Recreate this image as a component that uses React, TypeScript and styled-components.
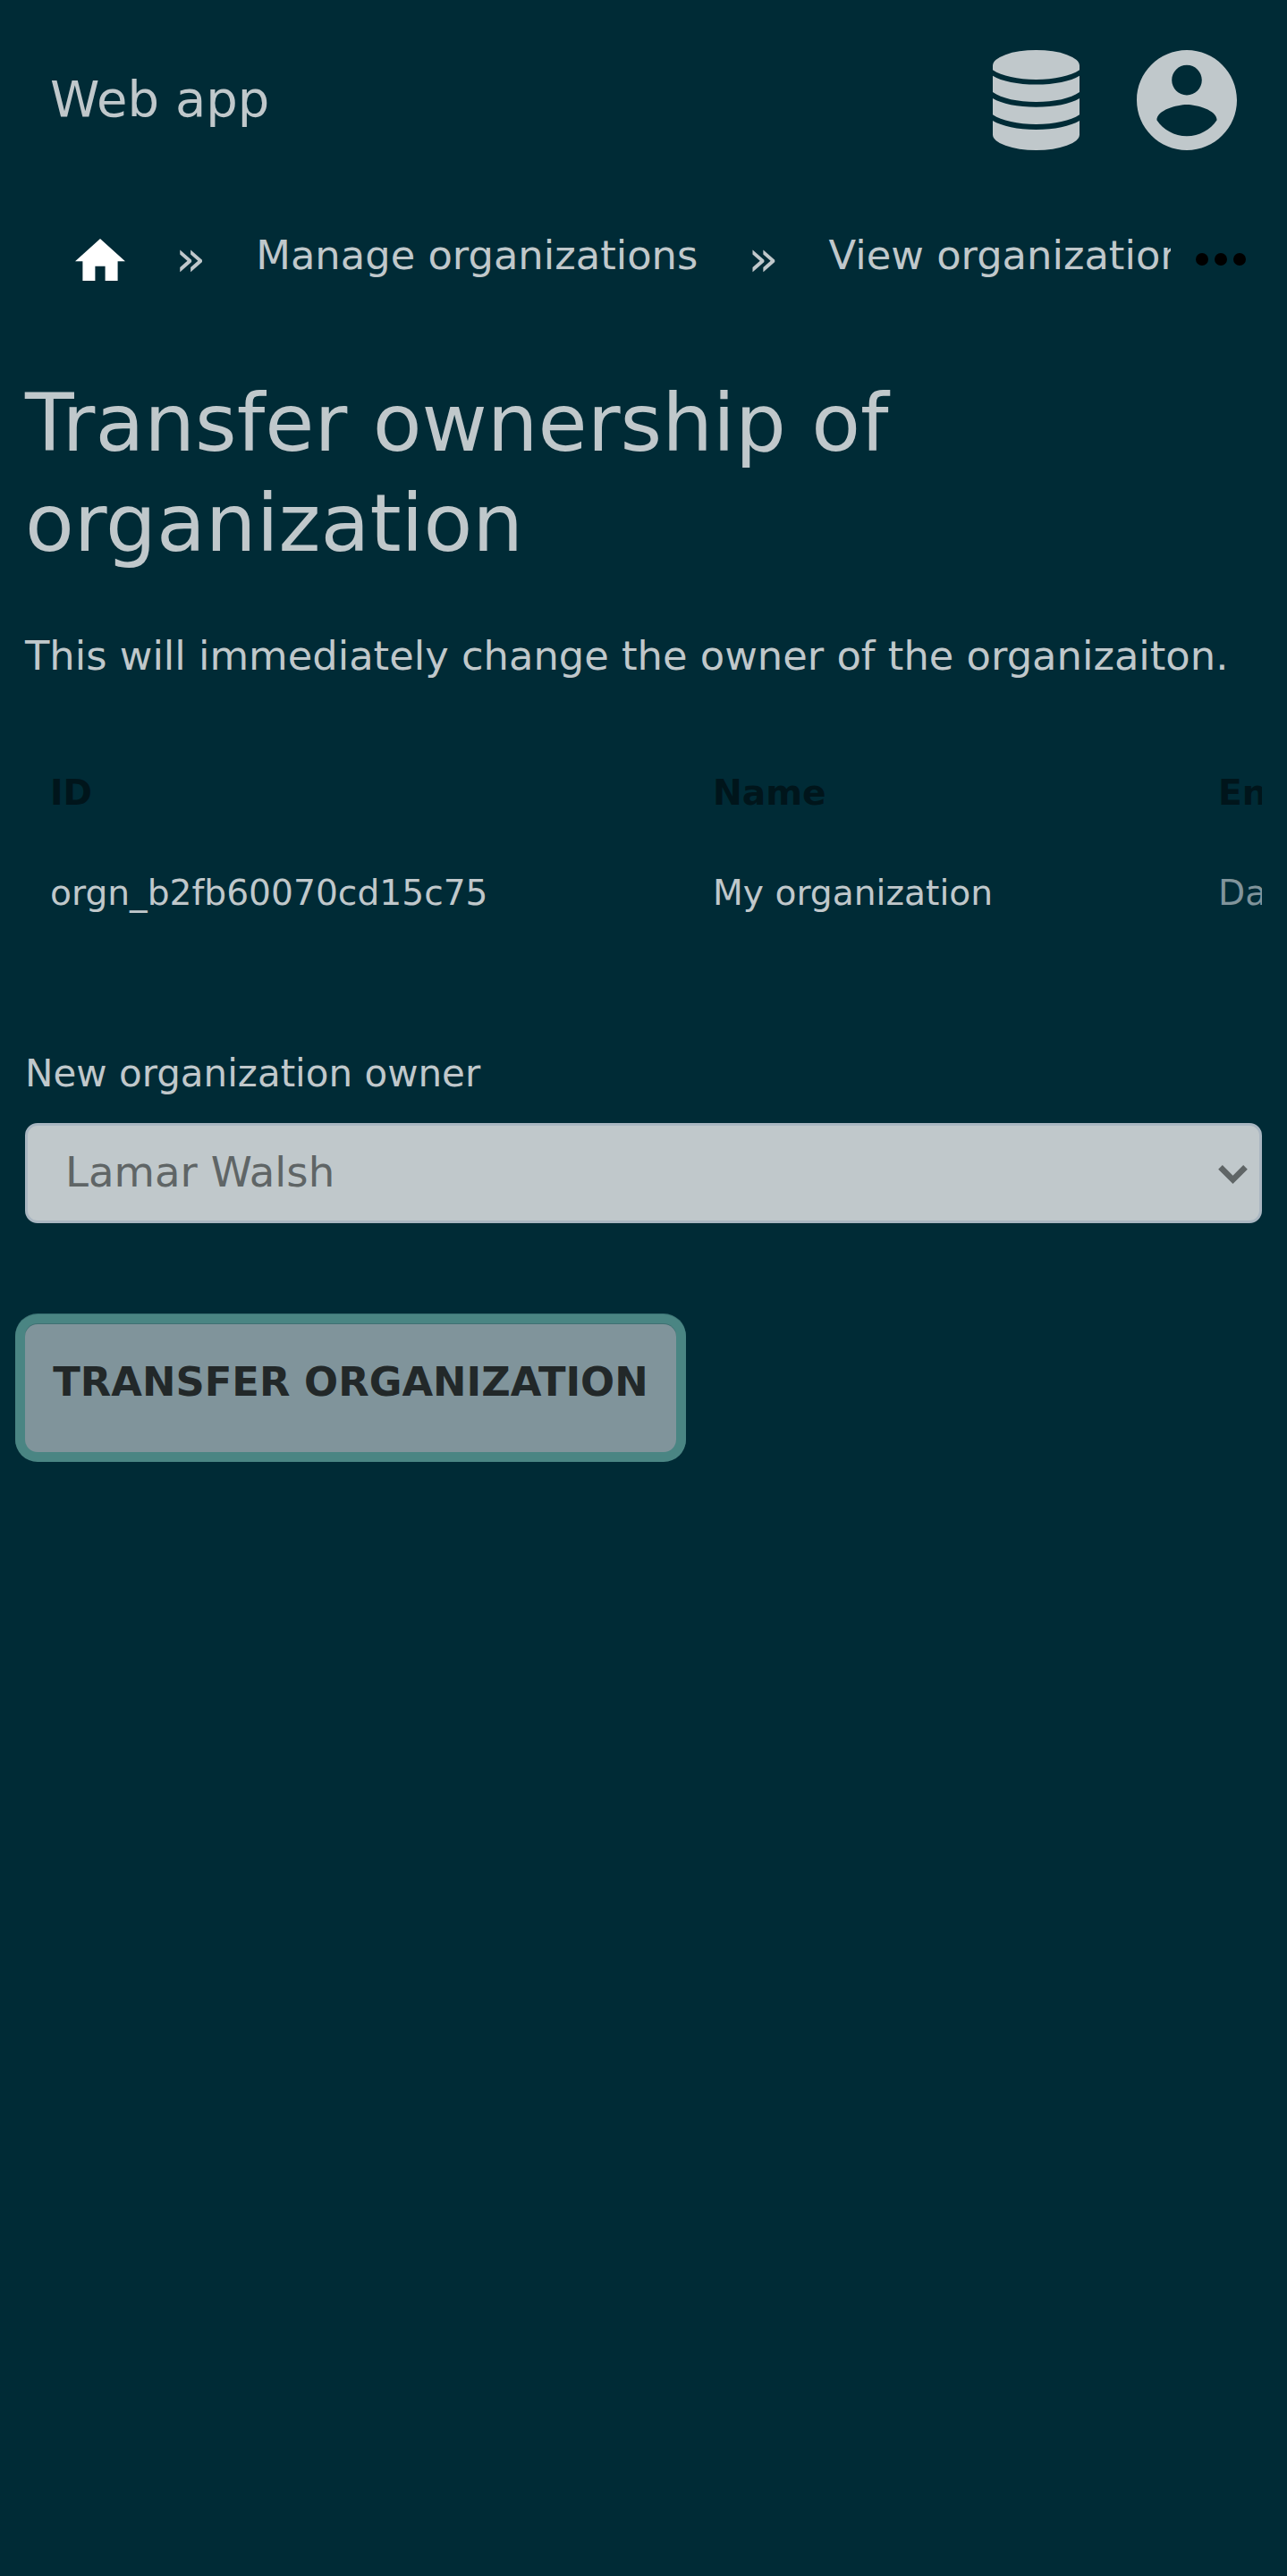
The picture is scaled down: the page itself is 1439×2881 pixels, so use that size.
import React from "react";
import styled, { createGlobalStyle } from "styled-components";

const ink = "#c0c8cb";

const GlobalStyle = createGlobalStyle`
  * { box-sizing: border-box; }
  html, body { margin: 0; background: #002b36; }
  body { font-family: "DejaVu Sans", sans-serif; color: ${ink}; }
`;

const Page = styled.div`
  min-height: 2881px;
  display: flex;
  flex-direction: column;
  overflow: hidden;
`;

const Header = styled.header`
  height: 224px;
  padding: 0 56px;
  display: flex;
  align-items: center;
  justify-content: space-between;
`;

const Brand = styled.a`
  font-size: 56px;
  line-height: 84px;
  padding-bottom: 3px;
`;

const Actions = styled.div`
  display: flex;
  align-items: center;
  gap: 64px;
`;

const Icon = styled.svg<{ $w: number; $h: number; $color?: string }>`
  display: block;
  flex: none;
  width: ${(p) => p.$w}px;
  height: ${(p) => p.$h}px;
  fill: ${(p) => p.$color ?? ink};
`;

const Crumbs = styled.nav`
  height: 132px;
  padding: 0 46px 0 84px;
  display: flex;
  align-items: center;
  justify-content: space-between;
`;

const Trail = styled.ol`
  flex: none;
  width: 1225px;
  height: 132px;
  margin: 0;
  padding: 0;
  list-style: none;
  display: flex;
  align-items: center;
  gap: 56px;
  overflow: hidden;
  white-space: nowrap;
`;

const Crumb = styled.li`
  flex: none;
  font-size: 44.8px;
  line-height: 68px;
  padding-bottom: 9px;
`;

const HomeCrumb = styled.li`
  flex: none;
  padding-top: 1px;
`;

const Separator = styled.li`
  flex: none;
  font-size: 56px;
  line-height: 68px;
  padding-bottom: 2px;
`;

const Main = styled.main`
  padding: 61px 28px 0;
`;

const Title = styled.h1`
  margin: 0;
  font-size: 89.6px;
  line-height: 112px;
  font-weight: 400;
`;

const Lead = styled.p`
  margin: 59px 0 0;
  font-size: 44.8px;
  line-height: 68px;
`;

const TableFrame = styled.div`
  margin-top: 63px;
  overflow: hidden;
`;

const Table = styled.div`
  width: 1600px;
  font-size: 39.2px;
  line-height: 112px;
`;

const Row = styled.div`
  display: grid;
  grid-template-columns: 741px 565px 294px;
  height: 112px;
`;

const HeadCell = styled.div`
  padding: 0 28px;
  font-weight: 700;
  color: #00151b;
`;

const Cell = styled.div<{ $muted?: boolean }>`
  padding: 0 28px;
  color: ${(p) => (p.$muted ? "#80949b" : ink)};
`;

const Label = styled.label`
  display: block;
  margin-top: 118px;
  font-size: 42px;
  line-height: 56px;
`;

const Select = styled.button`
  width: 100%;
  height: 112px;
  margin-top: 27px;
  padding: 0 13px 0 42px;
  display: flex;
  align-items: center;
  justify-content: space-between;
  border: 3px solid #a9b6c1;
  border-radius: 14px;
  background: ${ink};
  color: #5f6566;
  font: 46.67px/64px "DejaVu Sans", sans-serif;
`;

const Value = styled.span`
  padding-bottom: 2px;
`;

const Chevron = styled(Icon)`
  margin-top: 3px;
`;

const Submit = styled.button`
  display: block;
  width: 728px;
  height: 143px;
  margin-top: 113px;
  padding: 0 0 14px;
  border: 0;
  border-radius: 14px;
  background: #80949b;
  box-shadow:
    0 -1px 0 0 #3f7072,
    0 0 0 11px #4a8583,
    0 -1px 0 11px #3a7273;
  color: #222829;
  font: 700 44.8px/68px "DejaVu Sans", sans-serif;
  text-transform: uppercase;
  white-space: nowrap;
`;

const DatabaseIcon = () => (
  <Icon $w={97} $h={112} viewBox="0 0 97 112">
    <path d="M0 17.500A48.500 17.500 0 0 1 97 17.500V22.300C87 29 69 33 48.500 33S10 29 0 22.300z" />
    <path d="M0 28.700C10 35 28 38.500 48.500 38.500S87 35 97 28.700V47C87 54 69 58 48.500 58S10 54 0 47z" />
    <path d="M0 54C10 60 28 63.800 48.500 63.800S87 60 97 54V72.300C87 79 69 83 48.500 83S10 79 0 72.300z" />
    <path d="M0 79C10 85 28 89 48.500 89S87 85 97 79V94.500A48.500 17.500 0 0 1 0 94.500z" />
  </Icon>
);

export default function App() {
  return (
    <>
      <GlobalStyle />
      <Page>
        <Header>
          <Brand>Web app</Brand>
          <Actions>
            <DatabaseIcon />
            <Icon $w={112} $h={112} viewBox="2 2 20 20">
              <path d="M12 2C6.480 2 2 6.480 2 12s4.480 10 10 10 10-4.480 10-10S17.520 2 12 2zm0 3c1.660 0 3 1.340 3 3s-1.340 3-3 3-3-1.340-3-3 1.340-3 3-3zm0 14.200c-2.500 0-4.710-1.280-6-3.220.03-1.990 4-3.080 6-3.080 1.990 0 5.970 1.090 6 3.080-1.290 1.940-3.500 3.220-6 3.220z" />
            </Icon>
          </Actions>
        </Header>
        <Crumbs>
          <Trail>
            <HomeCrumb>
              <Icon $w={56} $h={47.6} $color="#fff" viewBox="2 3 20 17">
                <path d="M10 20v-6h4v6h5v-8h3L12 3 2 12h3v8z" />
              </Icon>
            </HomeCrumb>
            <Separator>»</Separator>
            <Crumb>Manage organizations</Crumb>
            <Separator>»</Separator>
            <Crumb>View organization</Crumb>
          </Trail>
          <Icon $w={56} $h={14} $color="#000" viewBox="4 10 16 4">
            <circle cx="6" cy="12" r="2" />
            <circle cx="12" cy="12" r="2" />
            <circle cx="18" cy="12" r="2" />
          </Icon>
        </Crumbs>
        <Main>
          <Title>Transfer ownership of organization</Title>
          <Lead>This will immediately change the owner of the organizaiton.</Lead>
          <TableFrame>
            <Table>
              <Row>
                <HeadCell>ID</HeadCell>
                <HeadCell>Name</HeadCell>
                <HeadCell>En</HeadCell>
              </Row>
              <Row>
                <Cell>orgn_b2fb60070cd15c75</Cell>
                <Cell>My organization</Cell>
                <Cell $muted>Da</Cell>
              </Row>
            </Table>
          </TableFrame>
          <Label>New organization owner</Label>
          <Select>
            <Value>Lamar Walsh</Value>
            <Chevron $w={33} $h={21} $color="#5f6566" viewBox="0 0 98 63">
              <path d="M0 14L14 0l35 35L84 0l14 14-49 49z" />
            </Chevron>
          </Select>
          <Submit>Transfer organization</Submit>
        </Main>
      </Page>
    </>
  );
}
